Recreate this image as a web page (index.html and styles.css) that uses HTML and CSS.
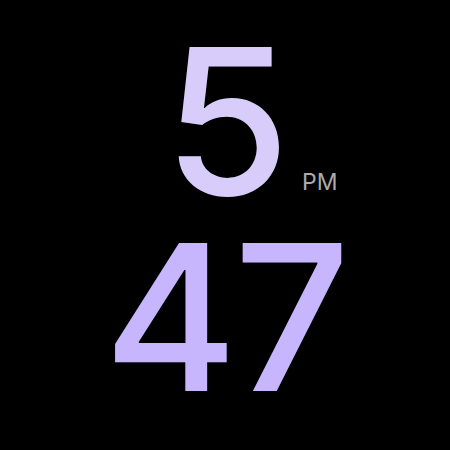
FILE: index.html
```html
<!DOCTYPE html>
<html>
<head>
<meta charset="utf-8">
<link rel="stylesheet" href="styles.css">
</head>
<body>
<div class="clock">
  <div class="hour-row">
    <span class="spacer"></span>
    <span class="hour">5</span>
    <span class="ampm">PM</span>
  </div>
  <div class="minute">47</div>
</div>
</body>
</html>
```
FILE: styles.css
```css
html, body {
  margin: 0;
  padding: 0;
  background: #000;
  width: 450px;
  height: 450px;
  overflow: hidden;
}
.clock {
  font-family: "Inter", "Liberation Sans", sans-serif;
  font-weight: 500;
  padding-top: 23px;
  display: flex;
  flex-direction: column;
  align-items: stretch;
}
.hour-row {
  display: grid;
  grid-template-columns: 1fr auto 1fr;
  align-items: baseline;
  line-height: 196px;
}
.hour {
  font-size: 204px;
  color: #d8cdfa;
  padding-left: 4px;
}
.ampm {
  font-size: 23px;
  font-weight: 400;
  color: #ababab;
  padding-left: 12px;
  line-height: 1;
  position: relative;
  top: -5px;
}
.minute {
  font-size: 204px;
  line-height: 196px;
  color: #c7b5fe;
  text-align: center;
  letter-spacing: -4px;
  padding-right: 0;
}
```
